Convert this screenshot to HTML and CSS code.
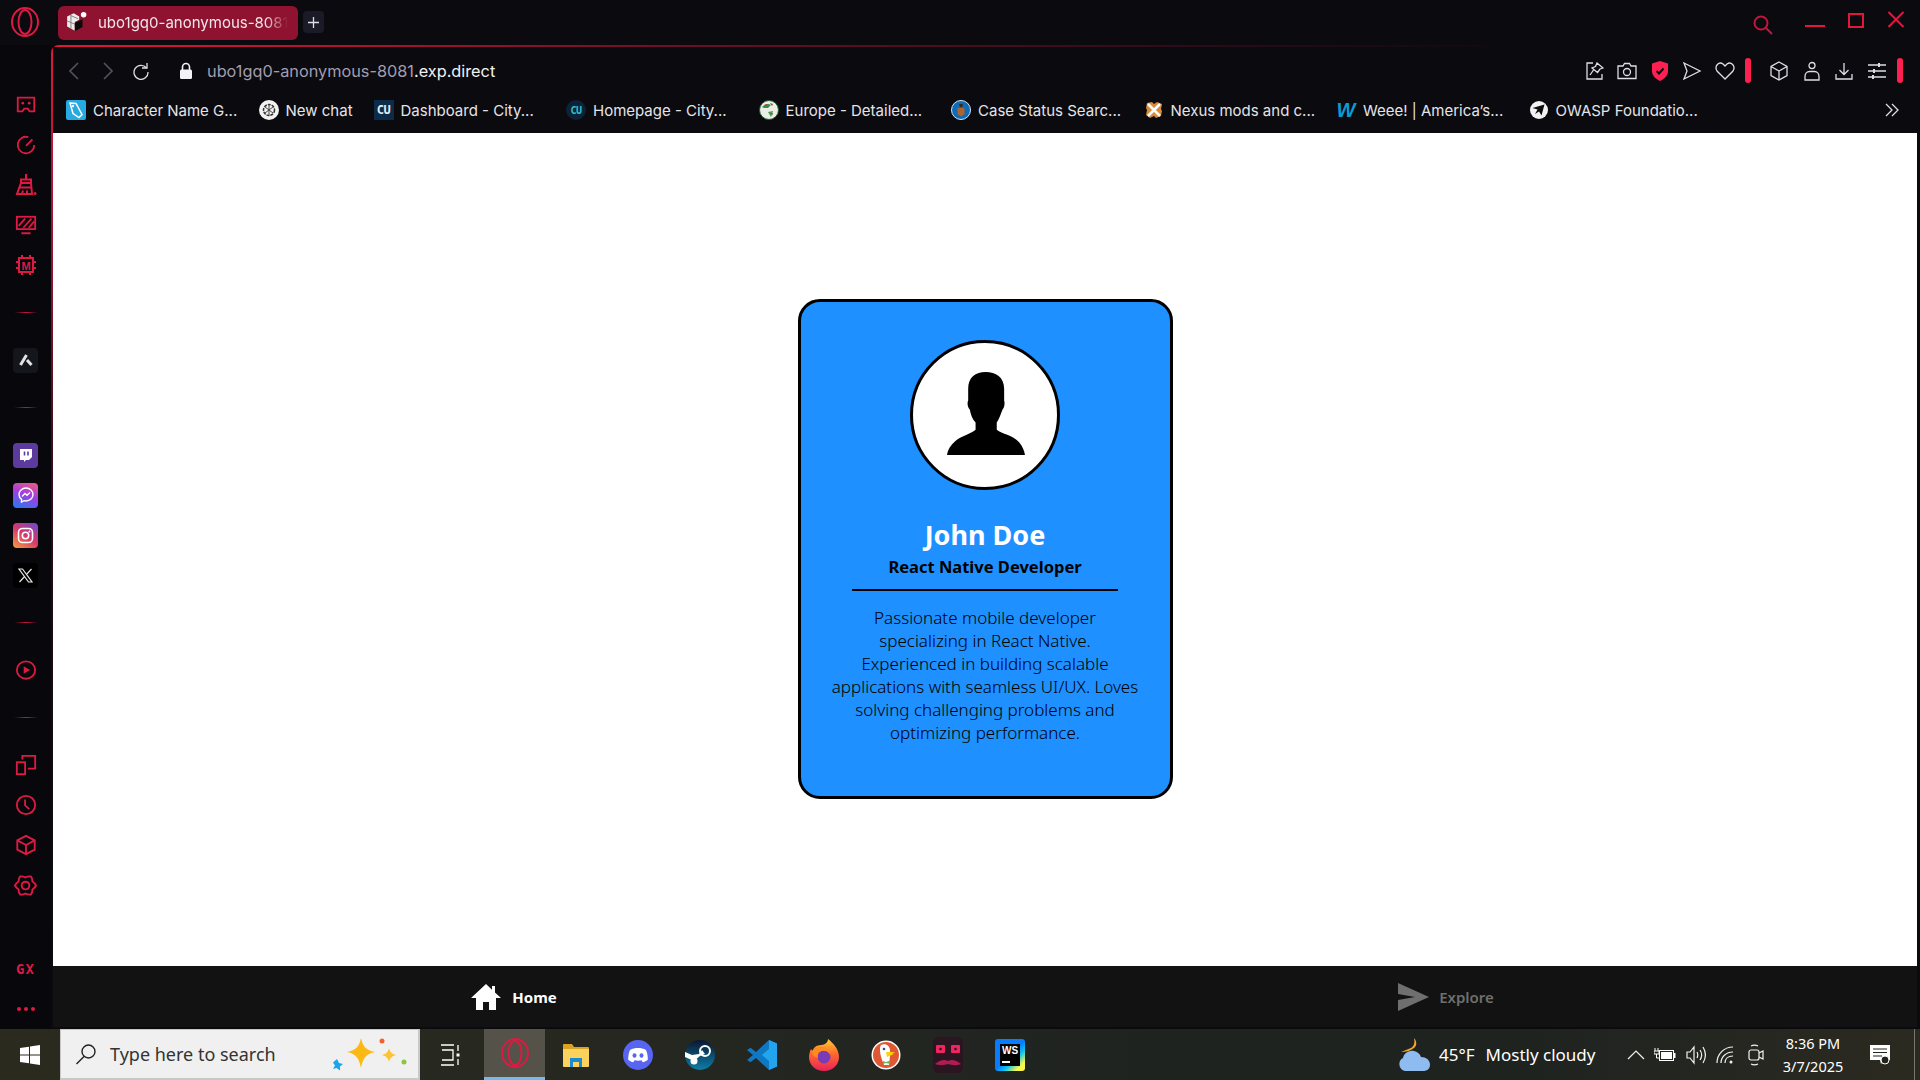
FILE: index.html
```html
<!DOCTYPE html>
<html lang="en">
<head>
    <meta charset="UTF-8">
    <title>ubo1gq0-anonymous-8081.exp.direct</title>
    <link rel="stylesheet" href="styles.css">
</head>
<body>
<div class="browser">
    <!-- tab strip -->
    <div class="tabstrip">
        <div class="logo">
            <svg class="line-red" width="30" height="32" viewBox="0 0 30 32"><ellipse cx="15" cy="16" rx="13" ry="14"/><ellipse cx="15" cy="16" rx="6.500" ry="12"/></svg>
        </div>
        <div class="tab">
            <svg width="22" height="24" viewBox="0 0 20 20"><path d="M1 5l6-3 5 3v3l-4 2v8l-7-4z" fill="#ececec"/><path d="M1 9l7 3M4 4l7 3M4.500 4v12" stroke="#777" fill="none" stroke-width="0.800"/><path d="M8 11l7-3.500v7L8 18.500z" fill="#0b0b0b"/><circle cx="16" cy="3.500" r="2.500" fill="#fff"/></svg>
            <span class="tab-title">ubo1gq0-anonymous-8081</span>
        </div>
        <div class="tab-add">
            <svg class="line-light" width="11" height="11" viewBox="0 0 11 11"><path d="M5.500 0v11M0 5.500h11"/></svg>
        </div>
        <div class="win-controls">
            <svg class="win-search" width="24" height="28" viewBox="0 0 24 28"><circle cx="10" cy="14" r="6.500"/><path d="M15 19l6 6"/></svg>
            <svg class="win-min" width="20" height="28" viewBox="0 0 20 28"><path d="M0 18h20"/></svg>
            <svg class="win-max" width="16" height="28" viewBox="0 0 16 28"><rect x="1" y="6" width="14" height="13"/></svg>
            <svg class="win-close" width="16" height="28" viewBox="0 0 16 28"><path d="M0.500 4l15 15M15.500 4l-15 15"/></svg>
        </div>
    </div>

    <div class="browser-body">
        <!-- opera gx sidebar -->
        <aside class="sidebar">
            <div class="side-slot"><svg class="line-red" width="22" height="22" viewBox="0 0 24 24"><path d="M3 4h18v15h-5l-2-3h-4l-2 3H3z"/><circle class="dot-red" cx="8.500" cy="10" r="1.500"/><circle class="dot-red" cx="15.500" cy="10" r="1.500"/></svg></div>
            <div class="side-slot"><svg class="line-red" width="22" height="22" viewBox="0 0 24 24"><path d="M14.500 3.400A9 9 0 1 0 21 12"/><path d="M12 13l7-7"/></svg></div>
            <div class="side-slot"><svg class="line-red" width="24" height="24" viewBox="0 0 24 24"><path d="M12 1v5M7 6.500h10v3.500H7zM7 10h10l1 11H3z"/><path d="M5 14.500h12.500M8 21l1-3.500M13 21l0-3.500"/><circle class="dot-red" cx="21" cy="20.500" r="1.500"/></svg></div>
            <div class="side-slot"><svg class="line-red" width="22" height="22" viewBox="0 0 24 24"><rect x="2" y="3" width="20" height="13.500"/><path d="M4 13l7-8M9 15l9-10M15 15l6-7M7 21h10" /></svg></div>
            <div class="side-slot"><svg class="line-red" width="24" height="24" viewBox="0 0 24 24"><path d="M5 5h14v14H5zM8 5V2M16 5V2M5 9H2M5 15H2M19 9h3M19 15h3M8 19v3M16 19v3"/><text class="chip-text" x="12" y="16.500">M</text></svg></div>
            <div class="side-sep"></div>
            <div class="side-slot">
                <div class="side-tile tile-aria"><svg width="14" height="14" viewBox="0 0 14 14"><path d="M7.500 2L1.500 12M8 7l4.500 5" stroke="#e2e2e2" stroke-width="3" fill="none"/></svg></div>
            </div>
            <div class="side-sep"></div>
            <div class="side-slot">
                <div class="side-tile tile-twitch"><svg width="14" height="15" viewBox="0 0 14 15"><path d="M1 1h12v8l-3 3H7l-2 2v-2H1z" fill="#fff"/><path d="M5.500 3.500v4M9 3.500v4" stroke="#5b3a9e" stroke-width="1.600"/></svg></div>
            </div>
            <div class="side-slot">
                <div class="side-tile tile-messenger"><svg width="18" height="18" viewBox="0 0 18 18"><path d="M9 2c-4 0-7 3-7 6.500 0 2 1 3.700 2.500 4.800V16l2.500-1.300c.6.200 1.300.300 2 .300 4 0 7-3 7-6.500S13 2 9 2z" fill="none" stroke="#fff" stroke-width="1.400"/><path d="M5 10.500l3-3 2 1.800 3-2.800" fill="none" stroke="#fff" stroke-width="1.300"/></svg></div>
            </div>
            <div class="side-slot">
                <div class="side-tile tile-insta"><svg width="17" height="17" viewBox="0 0 17 17"><rect x="1.500" y="1.500" width="14" height="14" rx="4" fill="none" stroke="#fff" stroke-width="1.600"/><circle cx="8.500" cy="8.500" r="3.200" fill="none" stroke="#fff" stroke-width="1.600"/><circle cx="12.500" cy="4.500" r="1" fill="#fff"/></svg></div>
            </div>
            <div class="side-slot">
                <div class="side-tile tile-x"><svg width="15" height="15" viewBox="0 0 15 15"><path d="M1 1h3.500l9.500 13h-3.500z" fill="none" stroke="#e8e8e8" stroke-width="1.200"/><path d="M13.500 1L8.300 6.700M6.600 8.500L1.500 14" stroke="#e8e8e8" stroke-width="1.200"/></svg></div>
            </div>
            <div class="side-sep"></div>
            <div class="side-slot"><svg class="line-red" width="22" height="22" viewBox="0 0 24 24"><ellipse cx="12" cy="12" rx="10" ry="9.500"/><path class="dot-red" d="M9.500 8l7 4-7 4z"/></svg></div>
            <div class="side-sep"></div>
            <div class="side-slot"><svg class="line-red" width="22" height="22" viewBox="0 0 24 24"><path d="M8 6V2h14v14H14"/><rect x="2" y="9" width="9" height="13"/></svg></div>
            <div class="side-slot"><svg class="line-red" width="22" height="22" viewBox="0 0 24 24"><circle cx="12" cy="12" r="10"/><path d="M11 6v6.500l4.500 4"/></svg></div>
            <div class="side-slot"><svg class="line-red" width="22" height="22" viewBox="0 0 24 24"><path d="M12 2l9.500 5v10L12 22l-9.500-5V7zM2.500 7l9.500 5 9.500-5M12 12v10"/></svg></div>
            <div class="side-slot"><svg class="line-red gear" width="23" height="23" viewBox="0 0 24 24"><path d="M12 3.700Q14.500 2.200 17.500 2.500Q19.400 4.800 19.200 7.850Q21.800 9.500 23 12Q21.800 14.500 19.200 16.150Q19.400 19.200 17.500 21.500Q14.500 21.800 12 20.300Q9.500 21.800 6.500 21.500Q4.600 19.200 4.800 16.150Q2.200 14.500 1 12Q2.200 9.500 4.800 7.850Q4.600 4.800 6.500 2.500Q9.500 2.200 12 3.700z"/><circle cx="12" cy="12" r="4"/></svg></div>
            <div class="side-footer">
                <div class="side-slot"><span class="gx-label">GX</span></div>
                <div class="side-slot side-dots"><i></i><i></i><i></i></div>
            </div>
        </aside>

        <div class="frame">
            <div class="frame-inner">
                <!-- address bar -->
                <div class="addressbar">
                    <div class="nav-btn"><svg class="line-dim" width="14" height="20" viewBox="0 0 14 20"><path d="M11 2l-8 8 8 8"/></svg></div>
                    <div class="nav-btn"><svg class="line-dim" width="14" height="20" viewBox="0 0 14 20"><path d="M3 2l8 8-8 8"/></svg></div>
                    <div class="nav-btn reload"><svg class="line-light" width="18" height="18" viewBox="0 0 18 18"><path d="M14.500 6A7 7 0 1 0 16 10"/><path d="M15 1v5h-5"/></svg></div>
                    <svg class="lock" width="14" height="18" viewBox="0 0 14 18"><path d="M3.500 8V5a3.500 3.500 0 0 1 7 0v3" fill="none" stroke="#f2f2f7" stroke-width="1.600"/><rect x="1" y="7.500" width="12" height="9.500" rx="1.500" fill="#f2f2f7"/></svg>
                    <span class="url">ubo1gq0-anonymous-8081<b>.exp.direct</b></span>
                    <div class="tools">
                        <div class="tool"><svg class="line-light" width="18" height="18" viewBox="0 0 18 18"><path d="M7 1H1v16h15v-5"/><path d="M11 1l6 5-3 1-2.500 3.500L6 6l3.500-1.500zM7.500 8L4 13"/></svg></div>
                        <div class="tool"><svg class="line-light" width="20" height="18" viewBox="0 0 20 18"><path d="M1 4h5l1.500-2.500h5L14 4h5v12.500H1z"/><circle cx="10" cy="10" r="3.500"/></svg></div>
                        <div class="tool"><svg width="18" height="20" viewBox="0 0 18 20"><path d="M9 0l8 2.500V10c0 5-4 8-8 10-4-2-8-5-8-10V2.500z" fill="#ff1f50"/><path d="M5.500 10l2.500 2.500 4.500-5" fill="none" stroke="#0a0a0f" stroke-width="2"/></svg></div>
                        <div class="tool"><svg class="line-light" width="20" height="20" viewBox="0 0 20 20"><path d="M2 2l16 8-16 8 3-8z"/></svg></div>
                        <div class="tool"><svg class="line-light" width="20" height="18" viewBox="0 0 20 18"><path d="M10 17L2 9C-1 4 4-1 8 2l2 2 2-2c4-3 9 2 6 7z"/></svg></div>
                        <div class="tool-bar"></div>
                        <div class="tool"><svg class="line-light" width="18" height="20" viewBox="0 0 18 20"><path d="M9 1l8 4.500v9L9 19l-8-4.500v-9zM1 5.500L9 10l8-4.500M9 10v9"/></svg></div>
                        <div class="tool"><svg class="line-light" width="16" height="20" viewBox="0 0 16 20"><circle cx="8" cy="4.500" r="3"/><path d="M1 19v-3.500C1 12.500 3 10.500 5.500 10.500h5c2.500 0 4.500 2 4.500 5V19z"/></svg></div>
                        <div class="tool"><svg class="line-light" width="18" height="18" viewBox="0 0 18 18"><path d="M9 1v11M4.500 8L9 12.500 13.500 8M1 12v5h16v-5"/></svg></div>
                        <div class="tool"><svg class="line-light" width="18" height="18" viewBox="0 0 18 18"><path d="M0 3h18M0 9h18M0 15h18"/><path d="M11 1v4M6 7v4M5 13v4" stroke-width="2"/></svg></div>
                        <div class="tool-bar tool-bar-end"></div>
                    </div>
                </div>

                <!-- bookmarks -->
                <div class="bookmarks">
                    <div class="bookmark">
                        <svg class="fav" width="20" height="20" viewBox="0 0 20 20"><rect width="20" height="20" rx="2" fill="#27a9e1"/><path d="M4 3l6 .5 6 11-3 3-6-4z" fill="none" stroke="#fff" stroke-width="1.500"/><circle cx="7" cy="6" r="1.200" fill="#fff"/></svg>
                        <span>Character Name G...</span>
                    </div>
                    <div class="bookmark bookmark-short">
                        <svg class="fav" width="20" height="20" viewBox="0 0 20 20"><circle cx="10" cy="10" r="10" fill="#f2f2f2"/><circle cx="10" cy="10" r="5.500" fill="none" stroke="#333" stroke-width="1.500" stroke-dasharray="3 1"/><path d="M6 7l8 6M14 7l-8 6M10 4.500v11" stroke="#444"/></svg>
                        <span>New chat</span>
                    </div>
                    <div class="bookmark">
                        <span class="fav fav-cu">CU</span>
                        <span>Dashboard - City...</span>
                    </div>
                    <div class="bookmark">
                        <span class="fav fav-cu-round">CU</span>
                        <span>Homepage - City...</span>
                    </div>
                    <div class="bookmark">
                        <svg class="fav" width="20" height="20" viewBox="0 0 20 20"><circle cx="10" cy="10" r="9.500" fill="#e9efe4" stroke="#1f5a3a"/><path d="M3 7c3-3 6-4 9-2l-3 3-4 0z" fill="#3c8a4c"/><path d="M11 3l3 1-1 2zM5 5l3-1 0 2z" fill="#b5392c"/><path d="M9 12l5-1-2 6z" fill="#4a9a54"/><path d="M12 13l2 0-1 3z" fill="#c0392b"/></svg>
                        <span>Europe - Detailed...</span>
                    </div>
                    <div class="bookmark">
                        <svg class="fav" width="20" height="20" viewBox="0 0 20 20"><circle cx="10" cy="10" r="9.500" fill="#0d6cb5" stroke="#d8e4ee"/><path d="M8 4h4l-1 3h-2z" fill="#3a2a1c"/><path d="M6.500 8h7v6l-3.500 2.500L6.500 14z" fill="#b0642c"/></svg>
                        <span>Case Status Searc...</span>
                    </div>
                    <div class="bookmark">
                        <svg class="fav" width="20" height="20" viewBox="0 0 20 20"><path d="M3 3l5-1 2 2 3-2 5 2-1 5 1 2-1 5-5 2-2-2-4 2-4-3 1-5-1-2z" fill="#d98a3a"/><path d="M4 4l12 12M16 4L4 16" stroke="#fff" stroke-width="2.500"/></svg>
                        <span>Nexus mods and c...</span>
                    </div>
                    <div class="bookmark">
                        <span class="fav fav-w">W</span>
                        <span>Weee! | America’s...</span>
                    </div>
                    <div class="bookmark">
                        <svg class="fav" width="20" height="20" viewBox="0 0 20 20"><circle cx="10" cy="10" r="9" fill="#f2f2f2"/><path d="M15.500 4.500L3.500 8l5 1.500L6 14l4-2.500 2.500 4z" fill="#0d0d0d"/></svg>
                        <span>OWASP Foundatio...</span>
                    </div>
                    <svg class="bookmarks-more line-light" width="14" height="14" viewBox="0 0 14 14"><path d="M1 1l6 6-6 6M7 1l6 6-6 6"/></svg>
                </div>

                <!-- the app itself -->
                <main class="page">
                    <div class="card">
                        <div class="avatar">
                            <svg width="78" height="83" viewBox="0 0 232 247"><path d="M115 0C145 0 170 15 170 50L170 85C172 90 172 105 165 112C160 125 155 140 148 150L148 172C165 185 200 190 215 210C225 222 230 235 232 247L0 247C3 230 10 218 25 205C45 190 70 185 85 172L85 150C75 140 70 125 68 112C60 105 60 90 63 85L63 50C63 15 85 0 115 0Z"/></svg>
                        </div>
                        <h1 class="name">John Doe</h1>
                        <h2 class="role">React Native Developer</h2>
                        <div class="divider"></div>
                        <p class="bio">Passionate mobile developer<br>specializing in React Native.<br>Experienced in building scalable<br>applications with seamless UI/UX. Loves<br>solving challenging problems and<br>optimizing performance.</p>
                    </div>
                </main>

                <nav class="bottom-nav">
                    <div class="nav-item active">
                        <svg width="32" height="28" viewBox="0 0 32 28"><path d="M16 1L1 15h5v12h7v-8h6v8h7V15h5l-6-5.500V3h-3v3.700z" fill="#fff"/></svg>
                        <span>Home</span>
                    </div>
                    <div class="nav-item">
                        <svg width="32" height="28" viewBox="0 0 32 28"><path d="M1 0l31 14L1 28l0-11 17-3L1 11z" fill="#6f6f6f"/></svg>
                        <span>Explore</span>
                    </div>
                </nav>
            </div>
        </div>
    </div>
</div>

<!-- windows taskbar -->
<footer class="taskbar">
    <div class="start">
        <svg width="20" height="20" viewBox="0 0 20 20"><path d="M0 3l9-1.300V9.500H0zM10 1.500L20 0v9.500H10zM0 10.500h9v7.800L0 17zM10 10.500h10V20l-10-1.500z" fill="#fff"/></svg>
    </div>
    <div class="search">
        <svg width="22" height="22" viewBox="0 0 22 22"><circle cx="13.500" cy="8.500" r="6.500" fill="none" stroke="#222" stroke-width="1.400"/><path d="M9 13.500L1.500 21" stroke="#222" stroke-width="1.400"/></svg>
        <span class="search-text">Type here to search</span>
        <svg class="sparkles" width="80" height="34" viewBox="0 0 80 34"><path d="M13 22l2 4 4 1-3 2.500 0 4-3.500-2.500-3.500 1 2-3.500-2-3z" fill="#18a7ee"/><path d="M37 1c2 9 5 12 14 14-9 2-12 6-14 16-2-10-5-14-14-16 9-2 12-5 14-14z" fill="#fcb813"/><path d="M65 11c1 4 3 6 7 7-4 1-6 3-7 7-1-4-3-6-7-7 4-1 6-3 7-7z" fill="#fcc433"/><circle cx="58" cy="4" r="2.500" fill="#f2622e"/><circle cx="80" cy="25" r="2.500" fill="#8cc63f"/></svg>
    </div>
    <div class="task task-view">
        <svg width="20" height="22" viewBox="0 0 20 22"><path d="M0 1h13M0 21h13M1 6h11v10H1M17 1v6M17 15v6" fill="none" stroke="#fff" stroke-width="1.300"/><rect x="15.500" y="9.500" width="3" height="3" fill="#fff"/></svg>
    </div>
    <div class="task task-active">
        <svg class="line-red" width="30" height="32" viewBox="0 0 30 32"><ellipse cx="15" cy="16" rx="13" ry="14"/><ellipse cx="15" cy="16" rx="6.500" ry="12"/></svg>
    </div>
    <div class="task">
        <svg width="28" height="26" viewBox="0 0 28 26"><path d="M1 3a1 1 0 0 1 1-1h8l2 3h14a1 1 0 0 1 1 1v3H1z" fill="#d9a520"/><path d="M1 7h26v17a1 1 0 0 1-1 1H2a1 1 0 0 1-1-1z" fill="#fbd25e"/><path d="M8 16h12v9h-3v-5h-6v5H8z" fill="#1d8ad0"/></svg>
    </div>
    <div class="task">
        <svg width="30" height="30" viewBox="0 0 30 30"><circle cx="15" cy="15" r="15" fill="#5865f2"/><path d="M7 10c2.500-1.500 5-2 8-2s5.500.5 8 2c1.500 3.500 2 7 1.700 10-1.700 1.300-3.500 2-5 2.200l-1.200-2c-2.300.6-4.700.6-7 0l-1.200 2c-1.500-.2-3.300-.9-5-2.200C5 17 5.500 13.500 7 10z" fill="#fff"/><ellipse cx="11.500" cy="15.500" rx="2" ry="2.300" fill="#5865f2"/><ellipse cx="18.500" cy="15.500" rx="2" ry="2.300" fill="#5865f2"/></svg>
    </div>
    <div class="task">
        <svg width="30" height="30" viewBox="0 0 30 30"><defs><linearGradient id="steamBg" x1="0" y1="0" x2="0" y2="1"><stop offset="0" stop-color="#0c1630"/><stop offset="1" stop-color="#0c7fa8"/></linearGradient></defs><circle cx="15" cy="15" r="15" fill="url(#steamBg)"/><path d="M0 17l9 4 6-5 5-2-3-4-3 4-7 1-7-3z" fill="#fff"/><circle cx="20" cy="11" r="5" fill="none" stroke="#fff" stroke-width="2"/><circle cx="9" cy="21" r="3.500" fill="#fff"/></svg>
    </div>
    <div class="task">
        <svg width="30" height="30" viewBox="0 0 30 30"><path d="M22 0l8 3.500v23L22 30 9 18l-5.500 4.200L0 20l6-5-6-5 3.500-2.200L9 12z" fill="#0f78c4"/><path d="M22 0l8 3.500v23L22 30V21l-7-6 7-6z" fill="#22a5ee"/></svg>
    </div>
    <div class="task">
        <svg width="30" height="32" viewBox="0 0 30 32"><defs><linearGradient id="foxBg" x1="0" y1="0" x2="0" y2="1"><stop offset="0" stop-color="#ffd02e"/><stop offset="0.450" stop-color="#ff6a2e"/><stop offset="1" stop-color="#e8235a"/></linearGradient></defs><path d="M19 0c5 4 11 10 11 18 0 8-6.500 14-15 14S0 26 0 18c0-3 1-6 2-8l1.500 2C5 8 7 7 9 6.500c4-.5 10-1 10-6.500z" fill="url(#foxBg)"/><circle cx="15" cy="18" r="6.500" fill="#7a3bb8"/><path d="M3 12c4-4 11-6 16-2 1 1 2 3 2 5-2-3-5-4-9-3-3 1-4 4-3 7-3-1-6-3-6-7z" fill="#ff8a1f"/></svg>
    </div>
    <div class="task">
        <svg width="30" height="30" viewBox="0 0 30 30"><circle cx="15" cy="15" r="14.500" fill="#fff"/><circle cx="15" cy="15" r="13" fill="#de5833"/><path d="M10 5c5-2 9 1 9 6v5l-1 9h-5c-2-5-4-10-4-15 0-2 0-4 1-5z" fill="#fff"/><circle cx="13" cy="9" r="1.300" fill="#2d4f8e"/><path d="M15 12h9l-3 2h2l-7 3z" fill="#fdd20a"/><path d="M12 21l3 1 4-1.500v3.500l-4-1-3 1z" fill="#65bc46"/></svg>
    </div>
    <div class="task">
        <svg width="30" height="36" viewBox="0 0 30 36"><rect width="30" height="36" rx="6" fill="#2a1520"/><rect x="3" y="8" width="9" height="8" rx="1" fill="#f0245f"/><rect x="18" y="8" width="9" height="8" rx="1" fill="#f0245f"/><circle cx="7.500" cy="12" r="1.300" fill="#2a1520"/><circle cx="22.500" cy="12" r="1.300" fill="#2a1520"/><path d="M2 27c5-4 9-5 13-3 4-2 8-1 13 3-5 2-9 1-13 0-4 1-8 2-13 0z" fill="#b01c50"/></svg>
    </div>
    <div class="task">
        <div class="ws-logo"><span class="ws-face">WS<i></i></span></div>
    </div>

    <div class="tray">
        <div class="weather">
            <svg width="34" height="34" viewBox="0 0 34 34"><path d="M17 0c1 5 0 8-3 10l-10 4c4 0 9-1 13-4 3-2 3-7 0-10z" fill="#f4a62a"/><path d="M8 33a7 7 0 0 1-2-13c1-5 6-8 11-7 3 .5 6 3 7 6 5 0 9 3 9 7.500S30 33 26 33z" fill="#8ebcf0"/></svg>
            <span class="temp">45°F</span>
            <span>Mostly cloudy</span>
        </div>
        <div class="tray-ico"><svg class="line-white" width="18" height="12" viewBox="0 0 18 12"><path d="M1 10l8-8 8 8"/></svg></div>
        <div class="tray-ico tray-battery"><svg width="22" height="16" viewBox="0 0 22 16"><path d="M1 1v3M4 1v3M0 4h5v3H0zM2.500 7v4h3" fill="none" stroke="#fff"/><rect x="5.500" y="3.500" width="14" height="10" fill="none" stroke="#fff"/><rect x="7" y="5" width="11" height="7" fill="#fff"/><rect x="20" y="6" width="1.500" height="5" fill="#fff"/></svg></div>
        <div class="tray-ico"><svg class="line-white" width="20" height="20" viewBox="0 0 20 20"><path d="M1 7h3l4-5v16l-4-5H1zM11 7c1 2 1 4 0 6M14 5c2 3 2 7 0 10M17 2c3 5 3 11 0 16"/></svg></div>
        <div class="tray-ico"><svg class="line-white" width="20" height="20" viewBox="0 0 20 20"><path d="M1 18C1 9 8 2 17 2M5 18c0-6 5-11 12-11M9 18c0-4 3-7 8-7"/><circle class="dot-white" cx="15" cy="17" r="1.500"/></svg></div>
        <div class="tray-ico"><svg class="line-white" width="16" height="22" viewBox="0 0 16 22"><path d="M3 2c2-1 5-1 7 0M3 20c2 1 5 1 7 0"/><rect x="1" y="6" width="10" height="10" rx="2"/><path d="M11 9l4-2v8l-4-2"/></svg></div>
        <div class="clock">
            <span>8:36 PM</span>
            <span>3/7/2025</span>
        </div>
        <div class="notify">
            <svg width="20" height="20" viewBox="0 0 20 20"><path d="M0 0h20v15h-6l-3 4-1-4H0z" fill="#fff"/><path d="M3 4h14M3 7.500h14M3 11h9" stroke="#22241f"/><circle cx="15" cy="15" r="4" fill="#22241f" stroke="#fff"/></svg>
        </div>
        <div class="show-desktop"></div>
    </div>
</footer>
</body>
</html>
```

FILE: styles.css
```css
* {
    box-sizing: border-box;
}

html, body {
    margin: 0;
    height: 100%;
}

body {
    width: 1920px;
    height: 1080px;
    overflow: hidden;
    background: #0a0a0f;
    font-family: Inter, "Noto Sans", sans-serif;
    display: flex;
    flex-direction: column;
}

svg {
    display: block;
    flex: none;
}

/* shared icon strokes */
.line-red {
    fill: none;
    stroke: #dc1a42;
    stroke-width: 2;
}

.gear {
    stroke-linejoin: round;
}

.dot-red {
    fill: #dc1a42;
    stroke: none;
}

.line-dim {
    fill: none;
    stroke: #55545c;
    stroke-width: 1.6;
}

.line-light {
    fill: none;
    stroke: #dedee4;
    stroke-width: 1.3;
}

.line-white {
    fill: none;
    stroke: #f2f2f2;
    stroke-width: 1.2;
}

.dot-white {
    fill: #f2f2f2;
    stroke: none;
}

.browser {
    height: 1029px;
    display: flex;
    flex-direction: column;
}

/* tab strip */
.tabstrip {
    height: 45px;
    display: flex;
    align-items: flex-start;
}

.logo {
    width: 51px;
    height: 45px;
    padding: 6px 0 0 10px;
}

.tab {
    width: 240px;
    height: 34px;
    margin: 6px 0 0 7px;
    padding: 0 0 2px 8px;
    display: flex;
    align-items: center;
    gap: 10px;
    background: #8f1330;
    border-radius: 6px;
    overflow: hidden;
}

.tab-title {
    font-size: 15px;
    color: #f2e6ea;
    white-space: nowrap;
    width: 190px;
    overflow: hidden;
    -webkit-mask-image: linear-gradient(90deg, #000 88%, transparent);
    mask-image: linear-gradient(90deg, #000 88%, transparent);
}

.tab-add {
    width: 21px;
    height: 22px;
    margin: 11px 0 0 5px;
    background: #1b1b27;
    border-radius: 4px;
    display: flex;
    align-items: center;
    justify-content: center;
}

.win-controls {
    margin-left: auto;
    margin-top: 8px;
    padding-right: 16px;
    display: flex;
    gap: 31px;
}

.win-controls svg {
    fill: none;
    stroke: #e3173e;
    stroke-width: 2;
}

.win-search {
    margin: 1px 0 0 2px;
    stroke: #c0173a !important;
}

.win-min {
    margin-left: -1px;
}

.win-max {
    margin-left: -8px;
}

.win-close {
    margin-left: -7px;
}

.browser-body {
    flex: 1;
    display: flex;
    min-height: 0;
}

/* sidebar */
.sidebar {
    width: 51px;
    padding-top: 40px;
    display: flex;
    flex-direction: column;
    background: #07070c;
}

.side-slot {
    height: 40px;
    display: flex;
    align-items: center;
    justify-content: center;
}

.side-sep {
    height: 55px;
    display: flex;
    align-items: center;
    justify-content: center;
}

.side-sep::before {
    content: "";
    width: 24px;
    height: 1px;
    background: linear-gradient(90deg, transparent, #c8173c 50%, transparent);
}

.side-tile {
    width: 25px;
    height: 25px;
    border-radius: 4px;
    display: flex;
    align-items: center;
    justify-content: center;
}

.tile-aria {
    background: #15151c;
}

.tile-twitch {
    background: #5d3a9e;
}

.tile-messenger {
    background: linear-gradient(200deg, #f35e7a, #a33ee0 45%, #1f7cf2);
}

.tile-insta {
    background: linear-gradient(35deg, #f5a13c, #d8386b 50%, #6b4bd0);
}

.tile-x {
    background: #000;
}

.chip-text {
    font-family: "Liberation Sans", sans-serif;
    font-size: 11px;
    font-weight: 700;
    fill: #dc1a42;
    stroke: none;
    text-anchor: middle;
}

.side-footer {
    margin-top: auto;
}

.gx-label {
    font-family: "DejaVu Sans Mono", monospace;
    font-size: 14px;
    font-weight: 700;
    letter-spacing: 1px;
    color: #dc1a42;
}

.side-dots {
    gap: 3px;
}

.side-dots i {
    width: 4px;
    height: 4px;
    border-radius: 50%;
    background: #dc1a42;
}

/* frame with the fading red edge */
.frame {
    flex: 1;
    padding: 2px 0 0 2px;
    border-top-left-radius: 8px;
    background:
        linear-gradient(90deg, #e3173e, #6d1028 33%, #2f0c17 60%, transparent 80%) top left / 100% 2px no-repeat,
        linear-gradient(180deg, #e3173e, #8a122f 25%, #3a0c18 42%, #160a10 62%, #0a0a0f) top left / 2px 100% no-repeat;
    overflow: hidden;
    min-width: 0;
}

.frame-inner {
    height: 100%;
    display: flex;
    flex-direction: column;
    background: #0a0a0f;
    border-top-left-radius: 6px;
}

/* address bar */
.addressbar {
    height: 44px;
    padding: 3px 17px 0 4px;
    display: flex;
    align-items: center;
}

.nav-btn {
    width: 34px;
    display: flex;
    justify-content: center;
}

.reload {
    margin-left: -1px;
}

.lock {
    margin-left: 21px;
}

.url {
    margin-left: 14px;
    font-size: 16.3px;
    color: #a29db0;
    white-space: nowrap;
}

.url b {
    font-weight: 400;
    color: #f2f2f2;
}

.tools {
    margin-left: auto;
    display: flex;
    align-items: center;
}

.tool {
    width: 32.5px;
    display: flex;
    justify-content: center;
}

.tool-bar {
    width: 6px;
    height: 25px;
    margin: 0 12px 0 4px;
    background: #ff1f50;
    border-radius: 3px;
}

.tool-bar-end {
    margin-right: 0;
}

/* bookmarks */
.bookmarks {
    height: 42px;
    padding: 0 0 4px 13px;
    display: flex;
    align-items: center;
}

.bookmark {
    width: 192.5px;
    flex: none;
    display: flex;
    align-items: center;
    gap: 7px;
    font-size: 15px;
    color: #e4e4e8;
    white-space: nowrap;
}

.bookmark-short {
    width: 115px;
}

.fav {
    width: 20px;
    height: 20px;
    flex: none;
}

.fav-cu, .fav-cu-round {
    display: flex;
    align-items: center;
    justify-content: center;
    font-family: "DejaVu Sans Mono", monospace;
    font-weight: 700;
    font-size: 12px;
    letter-spacing: -0.5px;
    color: #e8eef4;
    background: #0c2b48;
}

.fav-cu-round {
    border-radius: 50%;
    font-size: 10px;
    color: #2fc4c4;
    background: #0d2238;
}

.fav-w {
    font-family: "Liberation Sans", sans-serif;
    font-size: 20px;
    line-height: 20px;
    font-weight: 700;
    font-style: italic;
    color: #0a9bd4;
    text-align: center;
}

.bookmarks-more {
    margin-left: auto;
    margin-right: 21px;
}

/* the app */
.page {
    flex: 1;
    margin-right: 3px;
    background: #fff;
    display: flex;
    align-items: center;
    justify-content: center;
    font-family: "Noto Sans", sans-serif;
}

.card {
    width: 375px;
    height: 500px;
    margin-bottom: 1px;
    padding-top: 38px;
    background: #1e90ff;
    border: 3px solid #000;
    border-radius: 22px;
    display: flex;
    flex-direction: column;
    align-items: center;
}

.avatar {
    width: 150px;
    height: 150px;
    background: #fff;
    border: 3px solid #000;
    border-radius: 50%;
    display: flex;
    align-items: center;
    justify-content: center;
    padding: 0 0 4px 2px;
}

.name {
    margin: 26px 0 0;
    font-size: 27px;
    line-height: 38px;
    font-weight: 700;
    color: #fff;
}

.role {
    margin: 1px 0 0;
    font-size: 16.5px;
    line-height: 24px;
    font-weight: 700;
    color: #000;
}

.divider {
    width: 266px;
    height: 2px;
    margin: 10px 0 15px;
    background: #000;
}

.bio {
    width: 340px;
    margin: 0;
    font-size: 17px;
    font-weight: 300;
    line-height: 23px;
    color: #000;
    text-align: center;
}

.bottom-nav {
    height: 61px;
    margin: 0 3px 2px 0;
    background: #121212;
    display: flex;
    font-family: "Noto Sans", sans-serif;
}

.nav-item {
    flex: 1;
    padding-right: 11px;
    display: flex;
    align-items: center;
    justify-content: center;
    gap: 10px;
    font-size: 15px;
    font-weight: 600;
    color: #6f6f6f;
}

.nav-item.active {
    font-weight: 700;
    color: #fff;
}

/* taskbar */
.taskbar {
    height: 51px;
    display: flex;
    align-items: stretch;
    background: linear-gradient(90deg, #2b2a1e, #262820 30%, #1f2320 60%, #1f2320 80%, #2b2a20);
    font-family: "Noto Sans", sans-serif;
    color: #fff;
}

.start {
    width: 60px;
    display: flex;
    align-items: center;
    justify-content: center;
}

.search {
    width: 360px;
    padding: 0 14px 0 14px;
    display: flex;
    align-items: center;
    background: #f0f0f0;
    border: 2px solid #c8c8c8;
    border-width: 1px 2px 2px 1px;
    color: #333;
}

.search-text {
    margin-left: 13px;
    font-size: 18px;
    white-space: nowrap;
}

.sparkles {
    margin-left: auto;
    overflow: visible;
}

.task {
    width: 62px;
    display: flex;
    align-items: center;
    justify-content: center;
}

.task-view {
    width: 64px;
    padding-right: 3px;
}

.task-active {
    width: 61px;
    background: #55524a;
    border-bottom: 3px solid #76b9ed;
}

.ws-logo {
    width: 30px;
    height: 32px;
    display: flex;
    align-items: center;
    justify-content: center;
    border-radius: 3px;
    background: linear-gradient(135deg, #087cfa 50%, #07c3f2 65%, #fcf84a 85%);
}

.ws-face {
    position: relative;
    width: 20px;
    height: 22px;
    padding: 1px 0 0 2px;
    font-family: "Liberation Sans", sans-serif;
    font-size: 10px;
    font-weight: 700;
    line-height: 11px;
    color: #fff;
    background: #000;
}

.ws-face i {
    position: absolute;
    left: 2px;
    bottom: 3px;
    width: 8px;
    height: 2px;
    background: #fff;
}

.tray {
    margin-left: auto;
    display: flex;
    align-items: center;
}

.weather {
    width: 224px;
    display: flex;
    align-items: center;
    font-size: 17px;
    white-space: nowrap;
}

.temp {
    margin: 0 11px 0 8px;
}

.tray-ico {
    width: 30px;
    display: flex;
    justify-content: center;
}

.tray-battery {
    padding-right: 3px;
}

.clock {
    width: 84px;
    display: flex;
    flex-direction: column;
    align-items: center;
    gap: 4px;
    font-size: 14.500px;
    line-height: 19px;
}

.notify {
    width: 50px;
    display: flex;
    justify-content: center;
}

.show-desktop {
    width: 1px;
    height: 100%;
    margin: 0 5px 0 9px;
    background: #77776f;
}
```
